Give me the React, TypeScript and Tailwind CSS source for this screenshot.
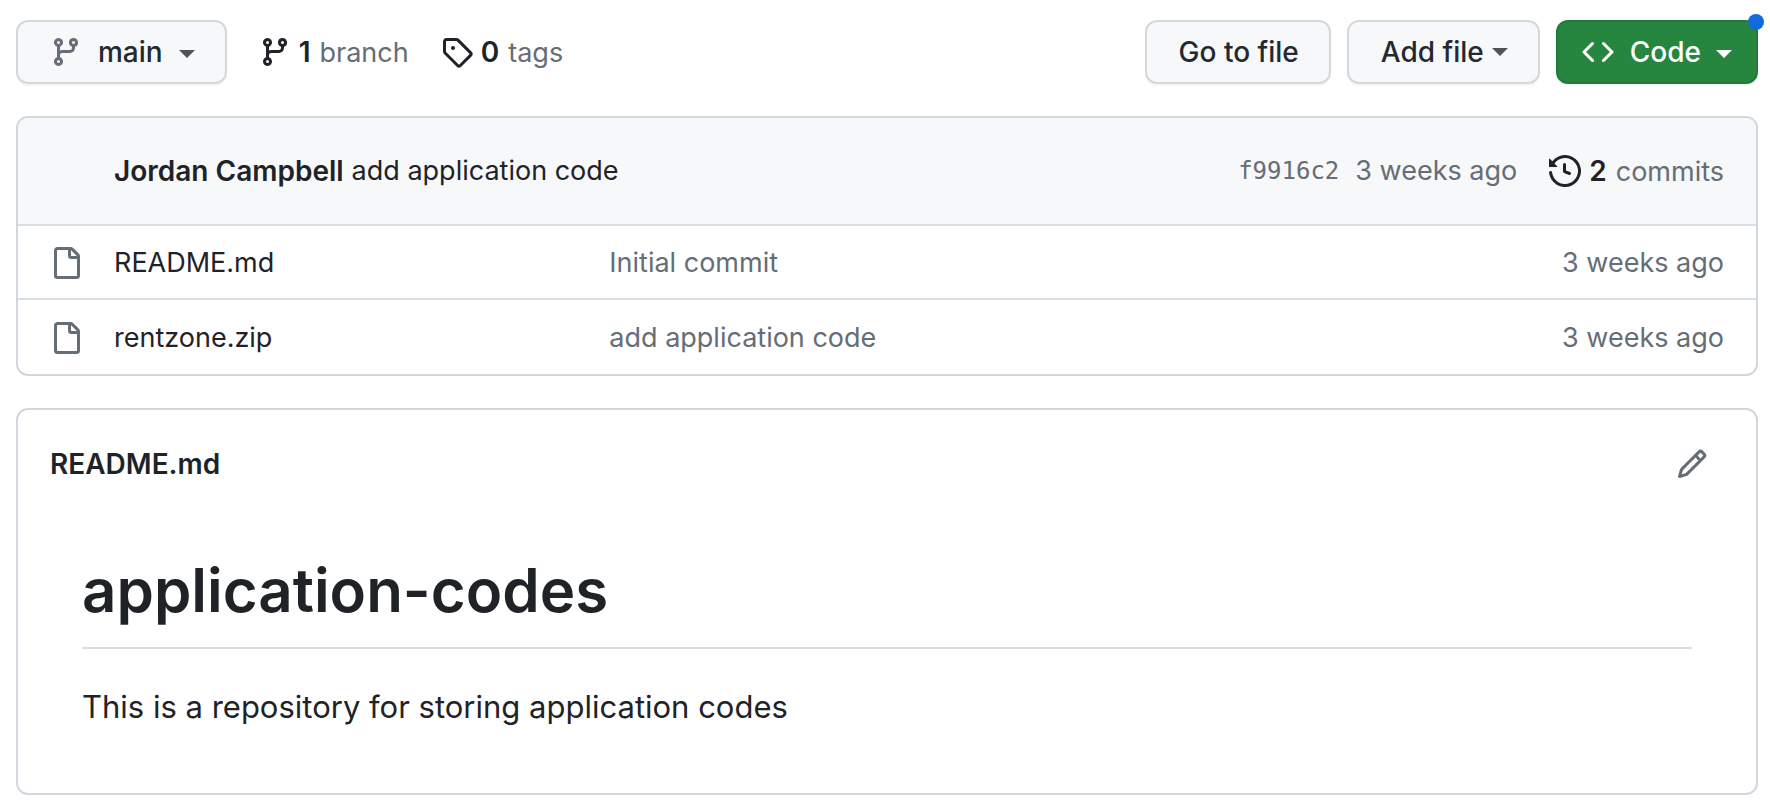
import React from "react";

const paths = {
  branch:
    "M9.5 3.25a2.25 2.25 0 1 1 3 2.122V6A2.5 2.5 0 0 1 10 8.5H6a1 1 0 0 0-1 1v1.128a2.251 2.251 0 1 1-1.5 0V5.372a2.25 2.25 0 1 1 1.5 0v1.836A2.493 2.493 0 0 1 6 7h4a1 1 0 0 0 1-1v-.628A2.25 2.25 0 0 1 9.5 3.25Zm-6 0a.75.75 0 1 0 1.5 0 .75.75 0 0 0-1.5 0Zm8.25-.75a.75.75 0 1 0 0 1.5.75.75 0 0 0 0-1.5ZM4.25 12a.75.75 0 1 0 0 1.5.75.75 0 0 0 0-1.5Z",
  tag: "M1 7.775V2.75C1 1.784 1.784 1 2.75 1h5.025c.464 0 .91.184 1.238.513l6.25 6.25a1.75 1.75 0 0 1 0 2.474l-5.026 5.026a1.75 1.75 0 0 1-2.474 0l-6.25-6.25A1.752 1.752 0 0 1 1 7.775Zm1.5 0c0 .066.026.13.073.177l6.25 6.25a.25.25 0 0 0 .354 0l5.025-5.025a.25.25 0 0 0 0-.354l-6.25-6.25a.25.25 0 0 0-.177-.073H2.75a.25.25 0 0 0-.25.25ZM6 5a1 1 0 1 1 0 2 1 1 0 0 1 0-2Z",
  code: "m11.28 3.22 4.25 4.25a.75.75 0 0 1 0 1.06l-4.25 4.25a.749.749 0 0 1-1.275-.326.749.749 0 0 1 .215-.734L13.94 8l-3.72-3.72a.749.749 0 0 1 .326-1.275.749.749 0 0 1 .734.215Zm-6.56 0a.751.751 0 0 1 1.042.018.751.751 0 0 1 .018 1.042L2.06 8l3.72 3.72a.749.749 0 0 1-.326 1.275.749.749 0 0 1-.734-.215L.47 8.53a.75.75 0 0 1 0-1.06Z",
  file: "M2 1.75C2 .784 2.784 0 3.75 0h6.586c.464 0 .909.184 1.237.513l2.914 2.914c.329.328.513.773.513 1.237v9.586A1.75 1.75 0 0 1 13.25 16h-9.5A1.75 1.75 0 0 1 2 14.25Zm1.75-.25a.25.25 0 0 0-.25.25v12.5c0 .138.112.25.25.25h9.5a.25.25 0 0 0 .25-.25V6h-2.75A1.75 1.75 0 0 1 9 4.25V1.5Zm6.75.062V4.25c0 .138.112.25.25.25h2.688l-.011-.013-2.914-2.914-.013-.011Z",
  history:
    "m.427 1.927 1.215 1.215a8.002 8.002 0 1 1-1.6 5.685.75.75 0 1 1 1.493-.154 6.5 6.5 0 1 0 1.18-4.458l1.358 1.358A.25.25 0 0 1 3.896 6H.25A.25.25 0 0 1 0 5.75V2.104a.25.25 0 0 1 .427-.177ZM7.75 4a.75.75 0 0 1 .75.75v2.992l2.028.812a.75.75 0 0 1-.557 1.392l-2.5-1A.751.751 0 0 1 7 8.25v-3.5A.75.75 0 0 1 7.75 4Z",
  pencil:
    "M11.013 1.427a1.75 1.75 0 0 1 2.474 0l1.086 1.086a1.75 1.75 0 0 1 0 2.474l-8.61 8.61c-.21.21-.47.364-.756.445l-3.251.93a.75.75 0 0 1-.927-.928l.929-3.25c.081-.286.235-.547.445-.758l8.61-8.61Zm.176 4.823L9.75 4.81l-6.286 6.287a.253.253 0 0 0-.064.108l-.558 1.953 1.953-.558a.253.253 0 0 0 .108-.064Zm1.238-3.763a.25.25 0 0 0-.354 0L10.811 3.75l1.439 1.44 1.263-1.263a.25.25 0 0 0 0-.354Z",
};

function Icon({ name, className = "" }: { name: keyof typeof paths; className?: string }) {
  return (
    <svg viewBox="0 0 16 16" fill="currentColor" aria-hidden="true" className={`size-8 shrink-0 ${className}`}>
      <path d={paths[name]} />
    </svg>
  );
}

function Caret({ className }: { className: string }) {
  return (
    <svg viewBox="0 0 16 8" fill="currentColor" aria-hidden="true" className={`h-2 w-4 shrink-0 ${className}`}>
      <path d="M0 0h16L8 8z" />
    </svg>
  );
}

function Count({ value, label }: { value: number; label: string }) {
  return (
    <span className="flex items-baseline gap-[9px] text-[#656d76]">
      <strong className="text-[28px] font-semibold text-[#1f2328]">{value}</strong>
      <span>{label}</span>
    </span>
  );
}

const button =
  "flex h-16 items-center rounded-xl border-2 text-[28px] font-medium whitespace-nowrap shadow-[0_2px_0_rgba(31,35,40,0.04)]";
const greyButton = "border-[#d5d8da] bg-[#f6f8fa] pr-[30px] pl-8 text-[#24292f]";

const files = [
  { name: "README.md", message: "Initial commit", age: "3 weeks ago" },
  { name: "rentzone.zip", message: "add application code", age: "3 weeks ago" },
];

export default function App() {
  return (
    <main className="bg-white pt-5 pr-3 pb-4 pl-4 font-['Inter',sans-serif] text-[27px] leading-[42px] text-[#1f2328]">
      <div className="flex items-center">
        <button type="button" className={`${button} ${greyButton}`}>
          <Icon name="branch" className="text-[#656d76]" />
          <span className="ml-4">main</span>
          <Caret className="mt-1 ml-4 text-[#4f5459]" />
        </button>
        <a href="#branches" className="ml-8 flex items-center gap-2">
          <Icon name="branch" />
          <Count value={1} label="branch" />
        </a>
        <a href="#tags" className="ml-8 flex items-center gap-2">
          <Icon name="tag" />
          <Count value={0} label="tags" />
        </a>
        <div className="ml-auto flex gap-4">
          <button type="button" className={`${button} ${greyButton}`}>
            Go to file
          </button>
          <button type="button" className={`${button} ${greyButton}`}>
            Add file
            <Caret className="ml-2 text-[#4f5459]" />
          </button>
          <button type="button" className={`${button} relative border-[#217a3a] bg-[#26863f] px-6 text-white`}>
            <Icon name="code" />
            <span className="ml-4">Code</span>
            <Caret className="mt-1 ml-[15px]" />
            <span className="absolute -top-2 -right-2 size-4 rounded-full bg-[#116bdc]" />
          </button>
        </div>
      </div>

      <section className="mt-8 overflow-hidden rounded-xl border-2 border-[#d0d7de]">
        <div className="flex h-[108px] items-center border-b-2 border-[#d8dee4] bg-[#f6f8fa] pr-8 pl-24">
          <a href="#author" className="text-[28px] font-semibold">
            Jordan Campbell
          </a>
          <a href="#commit" className="ml-2">
            add application code
          </a>
          <div className="ml-auto flex items-center text-[#656d76]">
            <a href="#sha" className="font-['DejaVu_Sans_Mono',monospace] text-2xl">
              f9916c2
            </a>
            <span className="ml-4">3 weeks ago</span>
            <a href="#commits" className="ml-8 flex items-center gap-2">
              <Icon name="history" className="text-[#1f2328]" />
              <Count value={2} label="commits" />
            </a>
          </div>
        </div>
        <table className="w-full table-fixed border-separate border-spacing-0">
          <tbody>
            {files.map((file) => (
              <tr key={file.name} className="h-[74px] *:border-[#d8dee4] *:pt-0.5 not-last:*:border-b-2">
                <td className="w-24 pl-8 text-[#656d76]">
                  <Icon name="file" />
                </td>
                <td className="w-[28.5%]">
                  <a href="#file">{file.name}</a>
                </td>
                <td className="text-[#656d76]">
                  <a href="#message">{file.message}</a>
                </td>
                <td className="w-56 pr-8 text-right text-[#656d76]">{file.age}</td>
              </tr>
            ))}
          </tbody>
        </table>
      </section>

      <section className="mt-8 rounded-xl border-2 border-[#d0d7de] px-8 pb-[62px]">
        <div className="flex h-[108px] items-center justify-between">
          <h2 className="text-[28px] font-semibold">README.md</h2>
          <button type="button" aria-label="Edit README" className="p-4 text-[#656d76]">
            <Icon name="pencil" />
          </button>
        </div>
        <article className="px-8 pt-8">
          <h1 className="border-b-2 border-[#d8dee4] pb-[17px] text-[60px] leading-[80px] font-semibold">
            application-codes
          </h1>
          <p className="mt-[34px] text-[31px] leading-[48px]">This is a repository for storing application codes</p>
        </article>
      </section>
    </main>
  );
}
